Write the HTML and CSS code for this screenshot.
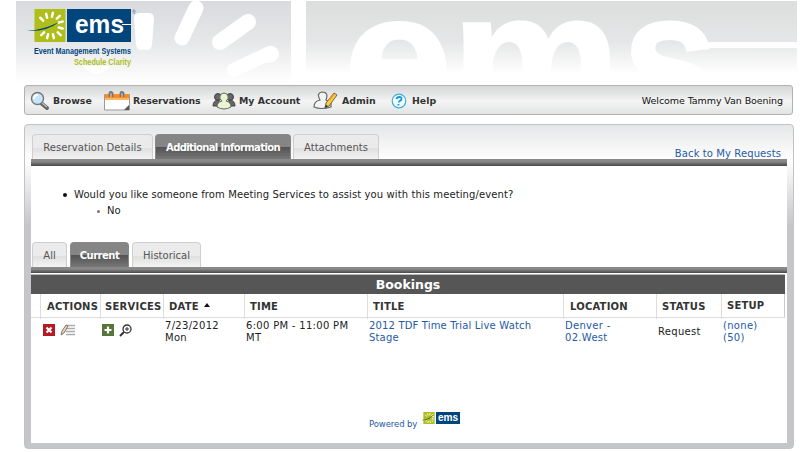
FILE: index.html
```html
<!DOCTYPE html>
<html lang="en">
<head>
<meta charset="utf-8">
<title>Event Management Systems</title>
<link rel="stylesheet" href="styles.css">
</head>
<body>
<svg width="0" height="0" class="defs">
  <symbol id="sun" viewBox="0 0 32 34">
    <rect width="32" height="34" fill="#afbe1b"/>
    <g stroke="#fff" stroke-width="2.6" stroke-linecap="round">
      <path d="M6 9l3 3M12 5l1 4M19 4l-1 4M26 7l-3 3M29 13l-4 1M29 20l-4-1M27 27l-3-3M20 30l-1-4M13 30l1-4M7 27l3-3"/>
    </g>
  </symbol>
</svg>
<header class="banner">
  <svg width="781" height="84" viewBox="16 0 781 84">
    <defs>
      <linearGradient id="sky" x1="0" y1="0" x2="0" y2="1"><stop offset="0" stop-color="#d9dadd"/><stop offset=".5" stop-color="#e6e7e9"/><stop offset="1" stop-color="#fff"/></linearGradient>
      <linearGradient id="sky2" x1="0" y1="0" x2="0" y2="1"><stop offset="0" stop-color="#dcdedd"/><stop offset=".55" stop-color="#e5e6e7"/><stop offset="1" stop-color="#fff"/></linearGradient>
      <clipPath id="fade"><rect x="300" y="1" width="497" height="80"/></clipPath>
    </defs>
    <rect x="16" y="1" width="275" height="82" fill="url(#sky)"/>
    <rect x="306" y="1" width="491" height="73" fill="url(#sky2)"/>
    <g fill="#fff">
      <path d="M134 18Q134 13 140 13H149Q154 13 154 19L152 45Q151 50 147 50H141Q137 50 136 45ZM83 66Q97 82 110 66Z"/>
      <g stroke="#fff" stroke-linecap="round" fill="none">
        <path d="M196 8L182 38" stroke-width="15"/><path d="M248 22L220 42" stroke-width="16"/><path d="M270 53L234 70" stroke-width="14"/><path d="M268 55L271 54" stroke-width="16"/>
      </g>
      <g clip-path="url(#fade)" class="mark heavy">
        <text x="344" y="119" font-size="180" textLength="108" lengthAdjust="spacingAndGlyphs">e</text>
        <text x="452" y="119" font-size="180" textLength="168" lengthAdjust="spacingAndGlyphs">m</text>
        <text x="623" y="119" font-size="180" textLength="94" lengthAdjust="spacingAndGlyphs">s</text>
      </g>
      <rect x="686" y="42" width="111" height="6"/>
    </g>
    <use href="#sun" x="34" y="9" width="32" height="33"/>
    <path d="M27 31Q43 30 59 22Q47 32 27 31Z" fill="#00457c"/>
    <rect x="67" y="9" width="64" height="33" fill="#00457c"/>
    <path d="M122 24.500H131" stroke="#fff"/>
    <text class="mark" x="75" y="33" font-size="26" fill="#fff" textLength="49" lengthAdjust="spacingAndGlyphs">ems</text>
    <text class="mark" x="34" y="54" font-size="8.500" fill="#00457c" textLength="97" lengthAdjust="spacingAndGlyphs">Event Management Systems</text>
    <text class="mark" x="74" y="65" font-size="8.500" fill="#afbe1b" textLength="57" lengthAdjust="spacingAndGlyphs">Schedule Clarity</text>
    <text class="mark" x="132" y="14" font-size="5" fill="#6989a8">®</text>
  </svg>
</header>
<nav class="menu">
  <a class="m1"><svg width="20" height="20" viewBox="0 0 20 20"><path d="M11 12l6 5" stroke="#666" stroke-width="4" stroke-linecap="round"/><path d="M12 12l5 4" stroke="#bbb" stroke-width="1.5"/><circle cx="7.5" cy="7.5" r="6" fill="#c5e6fa" stroke="#777" stroke-width="1.4"/><path d="M4 8Q4 4 8 4" stroke="#fff" stroke-width="2" fill="none"/></svg><span>Browse</span></a>
  <a class="m2"><svg width="26" height="21" viewBox="0 0 26 21"><path d="M.5 4.500h25v15.500H.5z" fill="#fff" stroke="#999"/><path d="M1 4h24v6H1z" fill="#fa8c23"/><path d="M1 8h24v2H1z" fill="#fdb765"/><path d="M5.500 7V3q1-2 3 0v4M16.500 7V3q1-2 3 0v4" fill="#ccc" stroke="#777" stroke-width="1.800"/><path d="M25 15v5h-5z" fill="#555"/></svg><span>Reservations</span></a>
  <a class="m3"><svg width="24" height="18" viewBox="0 0 24 18"><g fill="#666" stroke="#444"><circle cx="6" cy="5" r="3.500"/><circle cx="18" cy="5" r="3.500"/><path d="M1 14q0-6 6-6v6zM23 14q0-6-6-6v6z"/></g><path d="M5 15q0-5 5-6Q7 7 8 4q1-3 4-3t4 3q1 3-2 5 5 1 5 6-7 4-14 0z" fill="#e9f4d0" stroke="#666"/></svg><span>My Account</span></a>
  <a class="m4"><svg width="25" height="19" viewBox="0 0 25 19"><path d="M1 16q0-6 6-7-4-7 2-8 7 0 4 8l5 3v4Q8 19 1 16z" fill="#f3f3f3" stroke="#666" stroke-width="1.200"/><path d="M12 17l1-5 8-10 3 2-8 11z" fill="#fdd02e" stroke="#666"/><path d="M12 17l1-3 2 1z" fill="#222"/><path d="M16 9L21 3" stroke="#f28a2f" stroke-width="1.500"/></svg><span>Admin</span></a>
  <a class="m5"><svg width="16" height="16" viewBox="0 0 16 16"><circle cx="8" cy="8" r="6.800" fill="#f7fcff" stroke="#36aee2" stroke-width="1.200"/><path d="M5.500 6Q6 4 8.300 4q2.500 0 2.200 2-.3 1.300-1.500 1.800T8 9.500M7.400 11v1.500" fill="none" stroke="#159bd7" stroke-width="1.900"/></svg><span>Help</span></a>
  <span class="welcome">Welcome Tammy Van Boening</span>
</nav>
<main class="panel">
  <div class="top">
    <div class="tabs"><a class="tab t1">Reservation Details</a><a class="tab on t2">Additional Information</a><a class="tab t3">Attachments</a></div>
    <a class="back">Back to My Requests</a>
  </div>
  <div class="content">
    <div class="bar"></div>
    <ul class="question"><li><span>Would you like someone from Meeting Services to assist you with this meeting/event?</span><ul><li>No</li></ul></li></ul>
    <div class="tabs lower"><a class="tab t4">All</a><a class="tab on t5">Current</a><a class="tab t6">Historical</a></div>
    <div class="bar"></div>
    <section class="bookings">
      <h2>Bookings</h2>
      <div class="row head"><span></span><span>ACTIONS</span><span class="svc">SERVICES</span><span>DATE <i class="sort"></i></span><span>TIME</span><span>TITLE</span><span class="loc">LOCATION</span><span>STATUS</span><span class="up">SETUP</span></div>
      <div class="row data"><span></span>
        <span class="icons"><svg width="12" height="12"><rect width="12" height="12" fill="#b51a22"/><path d="M3.500 3.500l5 5m0-5l-5 5" stroke="#fff" stroke-width="2.200"/></svg><svg width="16" height="12" viewBox="0 0 16 12"><path d="M6 1.500h9M6 4.500h9M6 7.500h9M6 10.500h9" stroke="#aaa" stroke-width="1.300"/><path d="M1 11l1-4 4-6 2 1-4 7z" fill="#eed9aa" stroke="#777"/></svg></span>
        <span class="icons"><svg width="12" height="12"><rect width="12" height="12" fill="#55753c"/><path d="M6 2.500v7M2.500 6h7" stroke="#fff" stroke-width="2.200"/></svg><svg width="14" height="13" viewBox="0 0 14 13"><circle cx="8" cy="5" r="4" fill="#fff" stroke="#333" stroke-width="1.300"/><path d="M8 3v4M6 5h4" stroke="#333"/><path d="M5 8L1 12" stroke="#333" stroke-width="2"/></svg></span>
        <span>7/23/2012<br>Mon</span><span>6:00 PM - 11:00 PM<br>MT</span><span class="link title">2012 TDF Time Trial Live Watch<br>Stage</span><span class="link">Denver -<br>02.West</span><span class="status">Request</span><span class="link">(none)<br>(50)</span>
      </div>
    </section>
    <footer><span>Powered by</span><svg width="40" height="14" viewBox="0 0 40 14"><use href="#sun" x="2" y="1" width="12" height="12"/><path d="M0 9Q7 9 12 4Q8 10 0 9" fill="#00457c"/><rect x="15" y="1" width="24" height="12" fill="#00457c"/><text class="mark" x="17" y="10" font-size="10" fill="#fff" textLength="20" lengthAdjust="spacingAndGlyphs">ems</text></svg></footer>
  </div>
</main>
</body>
</html>
```
FILE: styles.css
```css
* { box-sizing: border-box; }
body { margin: 0; width: 812px; height: 452px; overflow: hidden; background: #fff; color: #222; font: 10px/12px "DejaVu Sans", sans-serif; }
.defs { display: block; height: 0; }
.banner { height: 85px; padding-left: 16px; }
.banner svg { display: block; }
.mark { font-family: "Liberation Sans", sans-serif; font-weight: bold; }
.heavy { stroke: #fff; stroke-width: 3px; }
.menu { margin-left: 24px; width: 769px; height: 30px; padding: 1px 9px 0 5px; display: flex; align-items: center; border: 1px solid #b0b2b3; border-radius: 3px; background: linear-gradient(#d5d6d7, #f4f4f4 55%, #e2e3e4); }
.menu a { display: flex; align-items: center; gap: 3px; font-size: 9.4px; font-weight: bold; color: #333; white-space: nowrap; }
.menu .m1 { width: 74px; }
.menu .m2 { width: 108px; gap: 3px; letter-spacing: -.12px; }
.menu .m3 { width: 101px; }
.menu .m4 { width: 78px; gap: 4px; }
.menu .m5 { gap: 5px; }
.welcome { margin-left: auto; font-size: 9.5px; color: #111; letter-spacing: -.08px; white-space: nowrap; }
.panel { margin: 9px 0 0 24px; width: 770px; height: 325px; border: 1px solid #c1c3c4; border-radius: 4px; padding: 0 6px 6px; background: linear-gradient(#e5e6e7, #fff 35px, #e8e9ea 60px, #c5c6c8 100px); }
.top { height: 34px; padding: 9px 6px 0 1px; display: flex; justify-content: space-between; }
.tabs { display: flex; gap: 2px; height: 25px; }
.tab { display: flex; align-items: center; justify-content: center; padding-top: 2px; border: 1px solid #cfcfcf; border-bottom: 0; border-radius: 4px 4px 0 0; background: linear-gradient(#ebebeb 55%, #e0e0e0 56%, #f3f3f3); color: #555; font-size: 10px; white-space: nowrap; }
.tab.on { background: linear-gradient(#858585 48%, #525252 50%, #777); border-color: #888; color: #fff; font-weight: bold; }
.t1 { width: 121px; letter-spacing: .07px; } .t2 { width: 136px; letter-spacing: -.63px; } .t3 { width: 86px; }
.t4 { width: 35px; } .t5 { width: 59px; letter-spacing: -.5px; } .t6 { width: 69px; }
.back { padding-top: 14px; color: #245aa6; letter-spacing: .1px; white-space: nowrap; }
.content { height: 284px; background: #fff; }
.bar { height: 7px; background: linear-gradient(#898989 35%, #484848); }
.question { list-style: none; margin: 0; padding: 21px 0 0 43px; height: 76px; line-height: 16px; letter-spacing: .1px; }
.question ul { list-style: none; margin: 0; padding: 0 0 0 33px; }
.question li::before { content: ""; float: left; width: 4px; height: 4px; border-radius: 50%; background: #111; margin: 6px 7px 0 -11px; }
.question li li::before { width: 3px; height: 3px; background: #777; margin: 7px 7px 0 -10px; }
.lower { padding-left: 1px; gap: 3px; }
.lower + .bar { height: 6px; }
.bookings { width: 754px; margin-top: 1px; }
.bookings h2 { margin: 0; height: 20px; border-top: 1px solid #bbb; background: #565656; color: #fff; font-size: 12.5px; line-height: 19px; text-align: center; }
.row { display: grid; grid-template-columns: 9px 60px 63px 81px 123px 196px 93px 65px 64px; }
.row span { white-space: nowrap; }
.head { height: 24px; border-right: 1px solid #ccc; border-bottom: 1px solid #ddd; font-weight: bold; line-height: 25px; color: #333; letter-spacing: .2px; }
.head > span + span { border-left: 1px solid #ddd; padding-left: 5px; }
.head > span:nth-child(2), .head > .loc { padding-left: 6px; }
.head > .svc { padding-left: 4px; letter-spacing: .25px; }
.head .up { line-height: 23px; }
.sort { display: inline-block; border: 3px solid transparent; border-top: 0; border-bottom: 4px solid #111; margin: 0 0 3px 2px; }
.data { padding-top: 2px; letter-spacing: .3px; }
.data > span { padding-left: 2px; }
.data .title { letter-spacing: .16px; }
.data .icons { display: flex; gap: 5px; padding: 4px 0 0 3px; }
.data .icons + .icons { padding-left: 2px; }
.data .status { padding-top: 6px; }
.data .link { color: #245aa6; }
footer { display: flex; padding: 67px 0 0 338px; gap: 4px; font-size: 8.500px; color: #245aa6; white-space: nowrap; letter-spacing: -.1px; }
footer span { padding-top: 7px; }
```
